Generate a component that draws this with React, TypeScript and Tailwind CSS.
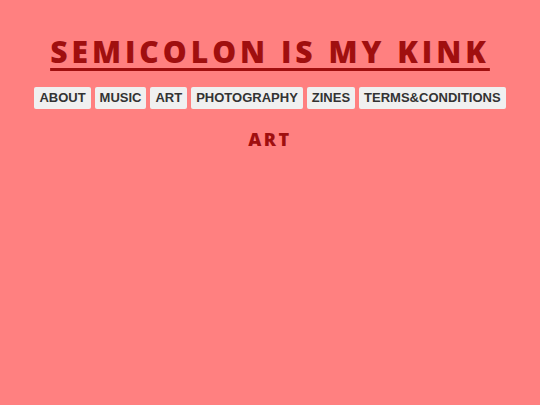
export default function App() {
  const items = ["ABOUT", "MUSIC", "ART", "PHOTOGRAPHY", "ZINES", "TERMS&CONDITIONS"];
  return (
    <div className="w-[540px] h-[405px] bg-[#ff8080] flex flex-col items-center">
      <h1 className="mt-[32px] font-['Open_Sans',sans-serif] text-[30px] leading-[40px] font-extrabold tracking-[4px] text-[#a00f0f] underline decoration-[3px] underline-offset-[5px]">
        SEMICOLON IS MY KINK
      </h1>
      <div className="mt-[15px] flex gap-[4px]">
        {items.map((t) => (
          <div key={t} className="h-[22px] px-[5px] flex items-center rounded-[2px] bg-[#f0f0f0] font-['Liberation_Sans',Arial,sans-serif] text-[13px] font-bold text-[#333]">
            {t}
          </div>
        ))}
      </div>
      <h2 className="mt-[18px] font-['Open_Sans',sans-serif] text-[18px] leading-[24px] font-extrabold tracking-[2.6px] text-[#a00f0f]">
        ART
      </h2>
    </div>
  );
}
